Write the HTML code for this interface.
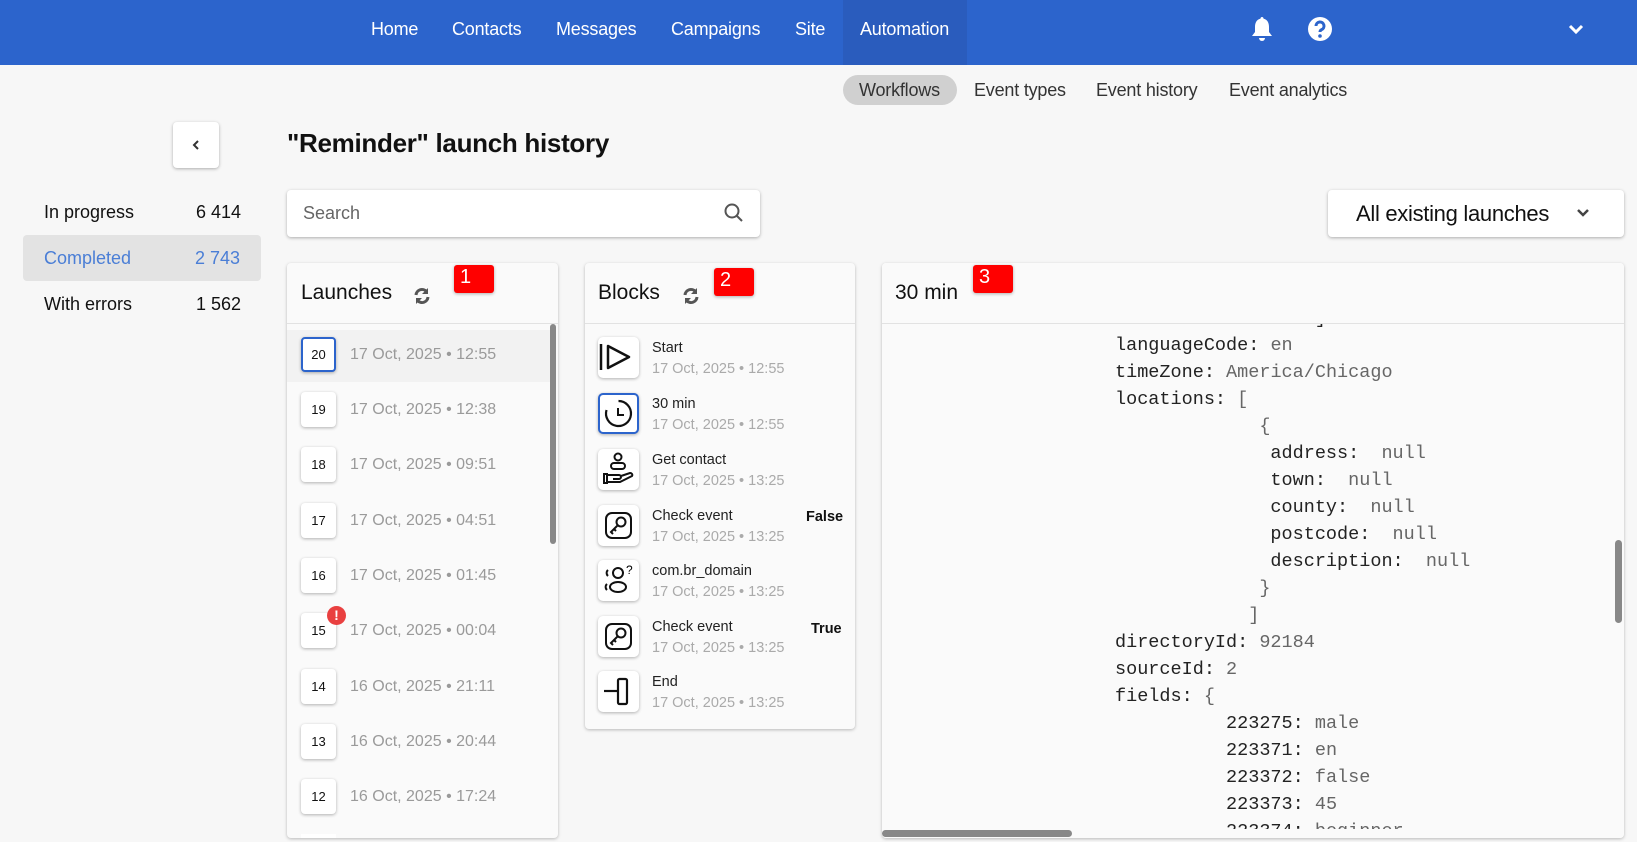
<!DOCTYPE html>
<html><head><meta charset="utf-8"><style>
*{box-sizing:border-box;margin:0;padding:0}
body{width:1637px;height:842px;overflow:hidden;background:#f7f7f7;font-family:"Liberation Sans",sans-serif;position:relative;color:#111}
.a{position:absolute}
.nav{left:0;top:0;width:1637px;height:65px;background:#2c64cc}
.nav span{position:absolute;top:19px;color:#fff;font-size:18px;letter-spacing:-0.2px}
.tab{top:80px;font-size:18px;color:#333;letter-spacing:-0.2px}
.card{background:#fafafa;border-radius:4px;box-shadow:0 1px 3px rgba(0,0,0,.25)}
.hd{position:absolute;left:0;right:0;top:0;height:61px;border-bottom:1px solid #e2e2e2}
.red{background:#f00;color:#fff;font-size:20px;border-radius:3px;width:40px;height:28px;padding:1px 0 0 6px;box-shadow:0 1px 3px rgba(0,0,0,.3)}
.num{width:35px;height:35px;background:#fff;border-radius:4px;box-shadow:0 1px 3px rgba(0,0,0,.3);font-size:13px;text-align:center;line-height:35px}
.dt{font-size:16px;color:#9a9a9a}
.ib{width:41px;height:41px;background:#fff;border-radius:5px;box-shadow:0 1px 3px rgba(0,0,0,.3)}
.bt{font-size:14.5px;color:#222}
.bd{font-size:14.5px;color:#aaa}
.code{font-family:"Liberation Mono",monospace;font-size:18.5px;color:#222;white-space:pre}
.code i{font-style:normal;color:#666}
</style></head><body>
<div class="a nav">
<span style="left:371px">Home</span><span style="left:452px">Contacts</span><span style="left:556px">Messages</span><span style="left:671px">Campaigns</span><span style="left:795px">Site</span>
<div class="a" style="left:843px;top:0;width:124px;height:65px;background:#2a5cbd"></div>
<span style="left:860px">Automation</span>
<svg class="a" style="left:1250px;top:15px" width="24" height="28" viewBox="0 0 24 28"><path d="M12 2c-1 0-1.5.8-1.5 1.6C6.5 4.5 5 8 5 12v5l-3 4h20l-3-4v-5c0-4-1.5-7.5-5.5-8.4C13.5 2.8 13 2 12 2z" fill="#fff"/><path d="M9 23a3 3 0 0 0 6 0z" fill="#fff"/></svg>
<svg class="a" style="left:1307px;top:16px" width="26" height="26" viewBox="0 0 26 26"><circle cx="13" cy="13" r="12" fill="#fff"/><path d="M9 10a4 4 0 1 1 5.5 3.7c-1 .5-1.5 1-1.5 2.3" stroke="#2c64cc" stroke-width="3" fill="none"/><circle cx="13" cy="20" r="1.8" fill="#2c64cc"/></svg>
<svg class="a" style="left:1568px;top:23px" width="16" height="12" viewBox="0 0 16 12"><path d="M2 3l6 6 6-6" stroke="#fff" stroke-width="3" fill="none"/></svg>
</div>
<div class="a" style="left:843px;top:75px;width:114px;height:30px;background:#d0d0d0;border-radius:15px"></div>
<span class="a tab" style="left:859px">Workflows</span>
<span class="a tab" style="left:974px">Event types</span>
<span class="a tab" style="left:1096px">Event history</span>
<span class="a tab" style="left:1229px">Event analytics</span>

<div class="a" style="left:173px;top:122px;width:46px;height:46px;background:#fff;border-radius:4px;box-shadow:0 1px 3px rgba(0,0,0,.3)"><svg class="a" style="left:17px;top:17px" width="12" height="12" viewBox="0 0 12 12"><path d="M8 2L4 6l4 4" stroke="#333" stroke-width="2" fill="none"/></svg></div>
<div class="a" style="left:287px;top:128px;font-size:26px;font-weight:bold;letter-spacing:-0.3px">"Reminder" launch history</div>

<div class="a" style="left:44px;top:202px;font-size:18px">In progress</div><div class="a" style="left:196px;top:202px;font-size:18px">6 414</div>
<div class="a" style="left:23px;top:235px;width:238px;height:46px;background:#e3e3e3;border-radius:4px"></div>
<div class="a" style="left:44px;top:248px;font-size:18px;color:#4a7ed6">Completed</div><div class="a" style="left:195px;top:248px;font-size:18px;color:#4a7ed6">2 743</div>
<div class="a" style="left:44px;top:294px;font-size:18px">With errors</div><div class="a" style="left:196px;top:294px;font-size:18px">1 562</div>

<div class="a" style="left:287px;top:190px;width:473px;height:47px;background:#fff;border-radius:4px;box-shadow:0 1px 3px rgba(0,0,0,.3)">
<span class="a" style="left:16px;top:13px;font-size:18px;color:#666">Search</span>
<svg class="a" style="left:437px;top:13px" width="20" height="20" viewBox="0 0 20 20"><circle cx="8" cy="8" r="6.5" stroke="#555" stroke-width="2" fill="none"/><path d="M13 13l5 5" stroke="#555" stroke-width="2"/></svg></div>
<div class="a" style="left:1328px;top:190px;width:296px;height:47px;background:#fff;border-radius:4px;box-shadow:0 1px 3px rgba(0,0,0,.3)">
<span class="a" style="left:28px;top:11px;font-size:22px;letter-spacing:-0.3px">All existing launches</span>
<svg class="a" style="left:248px;top:18px" width="14" height="10" viewBox="0 0 14 10"><path d="M2 2l5 5 5-5" stroke="#444" stroke-width="2.5" fill="none"/></svg></div>

<!-- Launches -->
<div class="a card" style="left:287px;top:263px;width:271px;height:575px;overflow:hidden">
<div class="hd"></div>
<span class="a" style="left:14px;top:18px;font-size:21px">Launches</span>
<svg class="a" style="left:125px;top:23px" width="20" height="20" viewBox="0 0 20 20"><path d="M4 9a6 6 0 0 1 10.5-3.5M16 11a6 6 0 0 1-10.5 3.5" stroke="#555" stroke-width="3" fill="none"/><path d="M16 2v6h-6z" fill="#555"/><path d="M4 18v-6h6z" fill="#555"/></svg>
<div class="a red" style="left:167px;top:2px">1</div>
<div class="a" style="left:0;top:67px;width:263px;height:52px;background:#f2f2f2"></div>
<div class="a" style="left:263px;top:61px;width:6px;height:220px;background:#888;border-radius:3px"></div>
</div>
<div class="a num" style="left:301px;top:337px;border:2px solid #2c64cc;line-height:31px">20</div><span class="a dt" style="left:350px;top:346px">17 Oct, 2025 • 12:55</span>
<div class="a num" style="left:301px;top:392px">19</div><span class="a dt" style="left:350px;top:401px">17 Oct, 2025 • 12:38</span>
<div class="a num" style="left:301px;top:447px">18</div><span class="a dt" style="left:350px;top:456px">17 Oct, 2025 • 09:51</span>
<div class="a num" style="left:301px;top:503px">17</div><span class="a dt" style="left:350px;top:512px">17 Oct, 2025 • 04:51</span>
<div class="a num" style="left:301px;top:558px">16</div><span class="a dt" style="left:350px;top:567px">17 Oct, 2025 • 01:45</span>
<div class="a num" style="left:301px;top:613px">15</div><span class="a dt" style="left:350px;top:622px">17 Oct, 2025 • 00:04</span>
<div class="a" style="left:327px;top:606px;width:19px;height:19px;border-radius:50%;background:#e94040;color:#fff;font-size:14px;font-weight:bold;text-align:center;line-height:19px">!</div>
<div class="a num" style="left:301px;top:669px">14</div><span class="a dt" style="left:350px;top:678px">16 Oct, 2025 • 21:11</span>
<div class="a num" style="left:301px;top:724px">13</div><span class="a dt" style="left:350px;top:733px">16 Oct, 2025 • 20:44</span>
<div class="a num" style="left:301px;top:779px">12</div><span class="a dt" style="left:350px;top:788px">16 Oct, 2025 • 17:24</span>
<div class="a" style="left:301px;top:834px;width:35px;height:4px;background:#fff"></div>

<!-- Blocks -->
<div class="a card" style="left:585px;top:263px;width:270px;height:466px">
<div class="hd"></div>
<span class="a" style="left:13px;top:18px;font-size:21px">Blocks</span>
<svg class="a" style="left:96px;top:23px" width="20" height="20" viewBox="0 0 20 20"><path d="M4 9a6 6 0 0 1 10.5-3.5M16 11a6 6 0 0 1-10.5 3.5" stroke="#555" stroke-width="3" fill="none"/><path d="M16 2v6h-6z" fill="#555"/><path d="M4 18v-6h6z" fill="#555"/></svg>
<div class="a red" style="left:129px;top:5px">2</div>
</div>
<div class="a ib" style="left:598px;top:337px"><svg width="41" height="41" viewBox="0 0 41 41"><path d="M3 7v26" stroke="#111" stroke-width="2.5"/><path d="M10 9l21 11-21 11z" stroke="#111" stroke-width="2.5" fill="none" stroke-linejoin="round"/></svg></div>
<div class="a ib" style="left:598px;top:393px;border:2px solid #2c64cc"><svg width="37" height="37" viewBox="0 0 37 37"><path d="M18.5 6a12.5 12.5 0 1 1-12 9" stroke="#111" stroke-width="2.2" fill="none"/><path d="M18 13v7h6" stroke="#111" stroke-width="2" fill="none"/></svg></div>
<div class="a ib" style="left:598px;top:449px"><svg width="41" height="41" viewBox="0 0 41 41"><circle cx="20" cy="8" r="3.5" stroke="#111" stroke-width="2" fill="none"/><rect x="13" y="14" width="14" height="6" rx="3" stroke="#111" stroke-width="2" fill="none"/><path d="M6 25h3v9H6zM9 26h12a2 2 0 0 1 0 4h-6M9 33h13l12-6a2 2 0 0 0-2-3l-9 3" stroke="#111" stroke-width="2" fill="none"/></svg></div>
<div class="a ib" style="left:598px;top:505px"><svg width="41" height="41" viewBox="0 0 41 41"><rect x="8" y="8" width="25" height="25" rx="6" stroke="#111" stroke-width="2" fill="none"/><circle cx="23" cy="17" r="4.5" stroke="#111" stroke-width="2" fill="none"/><path d="M20 20l-7 7 2 2M16 24l2 2" stroke="#111" stroke-width="2" fill="none"/></svg></div>
<div class="a ib" style="left:598px;top:560px"><svg width="41" height="41" viewBox="0 0 41 41"><circle cx="20" cy="13" r="5" stroke="#111" stroke-width="2" fill="none"/><ellipse cx="20" cy="27" rx="8" ry="5" stroke="#111" stroke-width="2" fill="none"/><path d="M10 10a4 4 0 0 0 0 6M9 24a4 4 0 0 0 0 6" stroke="#111" stroke-width="2" fill="none"/><text x="28" y="14" font-size="12" font-family="Liberation Sans">?</text></svg></div>
<div class="a ib" style="left:598px;top:616px"><svg width="41" height="41" viewBox="0 0 41 41"><rect x="8" y="8" width="25" height="25" rx="6" stroke="#111" stroke-width="2" fill="none"/><circle cx="23" cy="17" r="4.5" stroke="#111" stroke-width="2" fill="none"/><path d="M20 20l-7 7 2 2M16 24l2 2" stroke="#111" stroke-width="2" fill="none"/></svg></div>
<div class="a ib" style="left:598px;top:671px"><svg width="41" height="41" viewBox="0 0 41 41"><rect x="20" y="8" width="9" height="25" rx="1.5" stroke="#111" stroke-width="2.2" fill="none"/><path d="M6 20h14" stroke="#111" stroke-width="2.2"/></svg></div>
<span class="a bt" style="left:652px;top:340px">Start</span><span class="a bd" style="left:652px;top:361px">17 Oct, 2025 • 12:55</span>
<span class="a bt" style="left:652px;top:396px">30 min</span><span class="a bd" style="left:652px;top:417px">17 Oct, 2025 • 12:55</span>
<span class="a bt" style="left:652px;top:452px">Get contact</span><span class="a bd" style="left:652px;top:473px">17 Oct, 2025 • 13:25</span>
<span class="a bt" style="left:652px;top:508px">Check event</span><span class="a bd" style="left:652px;top:529px">17 Oct, 2025 • 13:25</span><b class="a" style="left:806px;top:509px;font-size:14.5px">False</b>
<span class="a bt" style="left:652px;top:563px">com.br_domain</span><span class="a bd" style="left:652px;top:584px">17 Oct, 2025 • 13:25</span>
<span class="a bt" style="left:652px;top:619px">Check event</span><span class="a bd" style="left:652px;top:640px">17 Oct, 2025 • 13:25</span><b class="a" style="left:811px;top:621px;font-size:14.5px">True</b>
<span class="a bt" style="left:652px;top:674px">End</span><span class="a bd" style="left:652px;top:695px">17 Oct, 2025 • 13:25</span>

<!-- Detail -->
<div class="a card" style="left:882px;top:263px;width:742px;height:575px;overflow:hidden">
<span class="a" style="left:13px;top:18px;font-size:21px">30 min</span>
<div class="a code" style="left:233px;top:42px;line-height:27px">                  ]
languageCode: <i>en</i>
timeZone: <i>America/Chicago</i>
locations: <i>[</i>
             <i>{</i>
              address:  <i>null</i>
              town:  <i>null</i>
              county:  <i>null</i>
              postcode:  <i>null</i>
              description:  <i>null</i>
             <i>}</i>
            <i>]</i>
directoryId: <i>92184</i>
sourceId: <i>2</i>
fields: <i>{</i>
          223275: <i>male</i>
          223371: <i>en</i>
          223372: <i>false</i>
          223373: <i>45</i>
          223374: <i>beginner</i></div>
<div class="a" style="left:0;top:0;width:742px;height:61px;background:#fafafa;border-bottom:1px solid #e2e2e2"></div>
<span class="a" style="left:13px;top:18px;font-size:21px">30 min</span>
<div class="a red" style="left:91px;top:2px">3</div>
<div class="a" style="left:0;top:566px;width:742px;height:9px;background:#fafafa"></div>
<div class="a" style="left:0;top:567px;width:190px;height:7px;background:#888;border-radius:4px"></div>
<div class="a" style="left:733px;top:277px;width:7px;height:83px;background:#888;border-radius:4px"></div>
</div>
</body></html>
